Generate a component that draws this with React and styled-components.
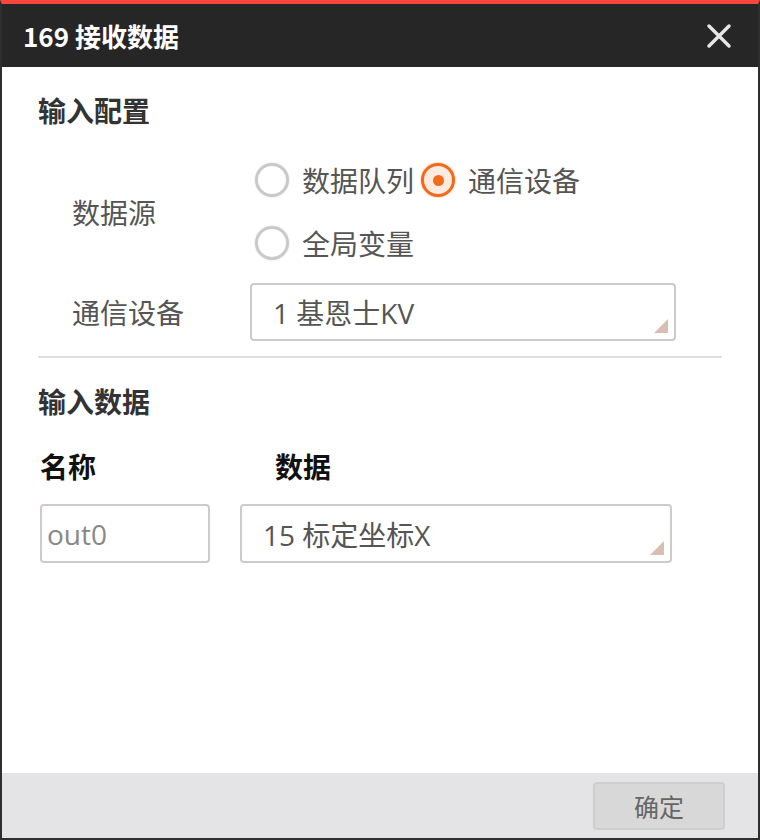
import React, { useState } from 'react'
import styled, { createGlobalStyle } from 'styled-components'

const GlobalStyle = createGlobalStyle`
  html, body {
    margin: 0;
    padding: 0;
    background: #ffffff;
  }
  * { box-sizing: border-box; }
`

const font = `"Open Sans", "Noto Sans CJK SC", sans-serif`

const Dialog = styled.div`
  width: 760px;
  height: 840px;
  display: flex;
  flex-direction: column;
  border: 2px solid #2e2e2e;
  border-top: 4px solid #f5473c;
  font-family: ${font};
  background: #fff;
`

const Header = styled.div`
  height: 63px;
  flex: none;
  background: #262626;
  display: flex;
  align-items: center;
  justify-content: space-between;
  padding: 0 26px 0 21px;
`

const Title = styled.h1`
  margin: 0;
  color: #fff;
  font-size: 26px;
  font-weight: 700;
  font-family: "Noto Sans CJK SC", sans-serif;
`

const CloseButton = styled.button`
  border: 0;
  background: none;
  padding: 0;
  width: 26px;
  height: 26px;
  display: flex;
  align-items: center;
  justify-content: center;
  cursor: pointer;
`

const Body = styled.div`
  flex: 1;
  padding: 23px 36px 0 36px;
`

const SectionTitle = styled.h2`
  margin: 0;
  font-size: 28px;
  line-height: 40px;
  font-weight: 700;
  color: #333;
  font-family: "Noto Sans CJK SC", sans-serif;
`

const FormRow = styled.div`
  display: flex;
  align-items: center;
  padding-left: 34px;
  margin-top: ${p => p.$top || 0}px;
`

const Label = styled.div`
  width: 178px;
  flex: none;
  font-size: 28px;
  color: #555;
  font-family: "Noto Sans CJK SC", sans-serif;
`

const RadioGroup = styled.div`
  display: flex;
  flex-wrap: wrap;
  width: 340px;
  row-gap: 27px;
  column-gap: 7px;
  margin-left: 5px;
`

const RadioOption = styled.label`
  display: flex;
  align-items: center;
  gap: 13px;
  height: 36px;
  cursor: pointer;
  font-size: 28px;
  color: #555;
  font-family: "Noto Sans CJK SC", sans-serif;
`

const RadioDot = styled.span`
  width: 34px;
  height: 34px;
  border-radius: 50%;
  flex: none;
  display: flex;
  align-items: center;
  justify-content: center;
  border: 3px solid ${p => (p.$on ? '#f26a1b' : '#c9c9c9')};
  background: ${p => (p.$on ? '#fdebe0' : '#fff')};
  box-shadow: 0 0 2px ${p => (p.$on ? 'rgba(242,106,27,0.6)' : 'rgba(0,0,0,0.15)')};

  &::after {
    content: '';
    width: 11px;
    height: 11px;
    border-radius: 50%;
    background: #f26a1b;
    display: ${p => (p.$on ? 'block' : 'none')};
  }
`

const Select = styled.div`
  position: relative;
  width: ${p => p.$w}px;
  height: ${p => p.$h || 59}px;
  border: 2px solid #cfcaca;
  border-radius: 4px;
  display: flex;
  align-items: center;
  padding-left: ${p => p.$pad || 21}px;
  font-size: 28px;
  color: #555;
  background: #fff;

  &::after {
    content: '';
    position: absolute;
    right: 6px;
    bottom: 6px;
    width: 0;
    height: 0;
    border-left: 14px solid transparent;
    border-bottom: 14px solid #d9bfb1;
  }
`

const Divider = styled.hr`
  margin: 15px 0 23px;
  border: 0;
  border-top: 2px solid #dedede;
`

const ColumnHeads = styled.div`
  display: flex;
  margin-top: 25px;
  padding-left: 2px;
`

const ColumnHead = styled.div`
  width: ${p => p.$w}px;
  font-size: 28px;
  font-weight: 700;
  color: #111;
  font-family: "Noto Sans CJK SC", sans-serif;
`

const DataRow = styled.div`
  display: flex;
  gap: 30px;
  margin-top: 18px;
  padding-left: 2px;
`

const TextInput = styled.input`
  width: 170px;
  height: 59px;
  border: 2px solid #cfcaca;
  border-radius: 4px;
  padding: 0 0 0 5px;
  font-size: 28px;
  font-family: ${font};
  color: #888;
  outline: none;
`

const Footer = styled.div`
  height: 65px;
  flex: none;
  background: #e4e4e6;
  display: flex;
  align-items: center;
  justify-content: flex-end;
  padding-right: 33px;
`

const Button = styled.button`
  width: 132px;
  height: 48px;
  border: 2px solid #cfcece;
  border-radius: 4px;
  background: #d9d8d8;
  color: #666;
  font-size: 25px;
  font-family: "Noto Sans CJK SC", sans-serif;
  cursor: pointer;
`

const sources = ['数据队列', '通信设备', '全局变量']

export default function App() {
  const [source, setSource] = useState('通信设备')

  return (
    <>
      <GlobalStyle />
      <Dialog>
        <Header>
          <Title>169 接收数据</Title>
          <CloseButton aria-label="close">
            <svg width="24" height="24" viewBox="0 0 24 24">
              <path d="M2 2 L22 22 M22 2 L2 22" stroke="#e6e6e6" strokeWidth="3.4" strokeLinecap="round" />
            </svg>
          </CloseButton>
        </Header>

        <Body>
          <SectionTitle>输入配置</SectionTitle>
          <FormRow $top={32}>
            <Label>数据源</Label>
            <RadioGroup>
              {sources.map(s => (
                <RadioOption key={s} onClick={() => setSource(s)}>
                  <RadioDot $on={source === s} />
                  {s}
                </RadioOption>
              ))}
            </RadioGroup>
          </FormRow>
          <FormRow $top={22}>
            <Label>通信设备</Label>
            <Select $w={426} $h={58}>1 基恩士KV</Select>
          </FormRow>

          <Divider />

          <SectionTitle>输入数据</SectionTitle>
          <ColumnHeads>
            <ColumnHead $w={235}>名称</ColumnHead>
            <ColumnHead>数据</ColumnHead>
          </ColumnHeads>
          <DataRow>
            <TextInput defaultValue="out0" />
            <Select $w={432}>15 标定坐标X</Select>
          </DataRow>
        </Body>

        <Footer>
          <Button>确定</Button>
        </Footer>
      </Dialog>
    </>
  )
}
